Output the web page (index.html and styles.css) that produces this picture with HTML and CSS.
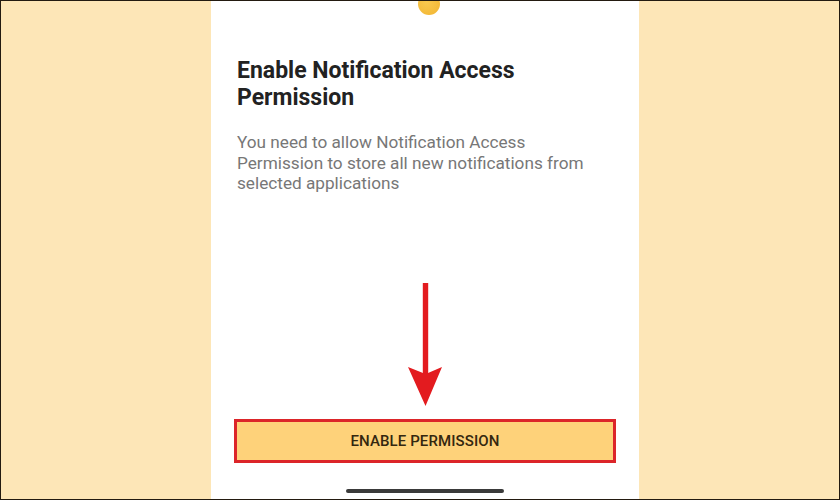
FILE: index.html
```html
<!DOCTYPE html>
<html lang="en">
<head>
    <meta charset="UTF-8">
    <meta name="viewport" content="width=device-width, initial-scale=1.0">
    <title>Enable Notification Access Permission</title>
    <link rel="stylesheet" href="styles.css">
</head>
<body>
    <div class="stage">
        <div class="phone">
            <div class="coin"></div>
            <h1 class="title">Enable Notification Access Permission</h1>
            <p class="desc">You need to allow Notification Access Permission to store all new notifications from selected applications</p>

            <!-- red pointer arrow -->
            <svg class="arrow" width="38" height="126" viewBox="406 282 38 126">
                <rect x="422.8" y="283" width="5.4" height="92" fill="#e31b1f"/>
                <polygon points="408,367 423,373 428,373 442,367 425.5,406" fill="#e31b1f"/>
            </svg>

            <button class="enable-btn" type="button">ENABLE PERMISSION</button>
            <div class="home-bar"></div>
        </div>
    </div>
</body>
</html>
```

FILE: styles.css
```css
* {
    box-sizing: border-box;
}
html, body {
    margin: 0;
    padding: 0;
}
body {
    font-family: Roboto, 'Noto Sans', Arial, sans-serif;
    background-color: #231a10;
}
.stage {
    width: 840px;
    height: 500px;
    border: 1px solid #231a10;
    background-color: #fde6b7;
    padding-left: 210px;
    overflow: hidden;
}
.phone {
    position: relative;
    width: 428px;
    height: 498px;
    background: #fff;
    display: flex;
    flex-direction: column;
    padding: 56px 26px 6px 26px;
}
.coin {
    position: absolute;
    left: 207px;
    top: -8px;
    width: 22px;
    height: 22px;
    border-radius: 50%;
    background: radial-gradient(circle at 40% 40%, #f9c94f, #f1b431);
}
.title {
    margin: 0;
    font-size: 23px;
    line-height: 27px;
    font-weight: 700;
    color: #222;
    width: 310px;
}
.desc {
    margin: 21px 0 0 0;
    width: 364px;
    font-size: 17.2px;
    line-height: 20.5px;
    color: #777;
}
.arrow {
    display: block;
    margin: auto auto 11px auto;
}
.enable-btn {
    display: block;
    width: 382px;
    height: 44px;
    margin-left: -3px;
    border: 3px solid #dc2529;
    background: #fed27a;
    font-family: Roboto, 'Noto Sans', Arial, sans-serif;
    font-size: 15px;
    font-weight: 500;
    color: #34270f;
    letter-spacing: 0.1px;
    padding: 0;
}
.home-bar {
    width: 158px;
    height: 4px;
    border-radius: 2px;
    background: #3a3a3a;
    margin: 26px auto 0 auto;
}
```
